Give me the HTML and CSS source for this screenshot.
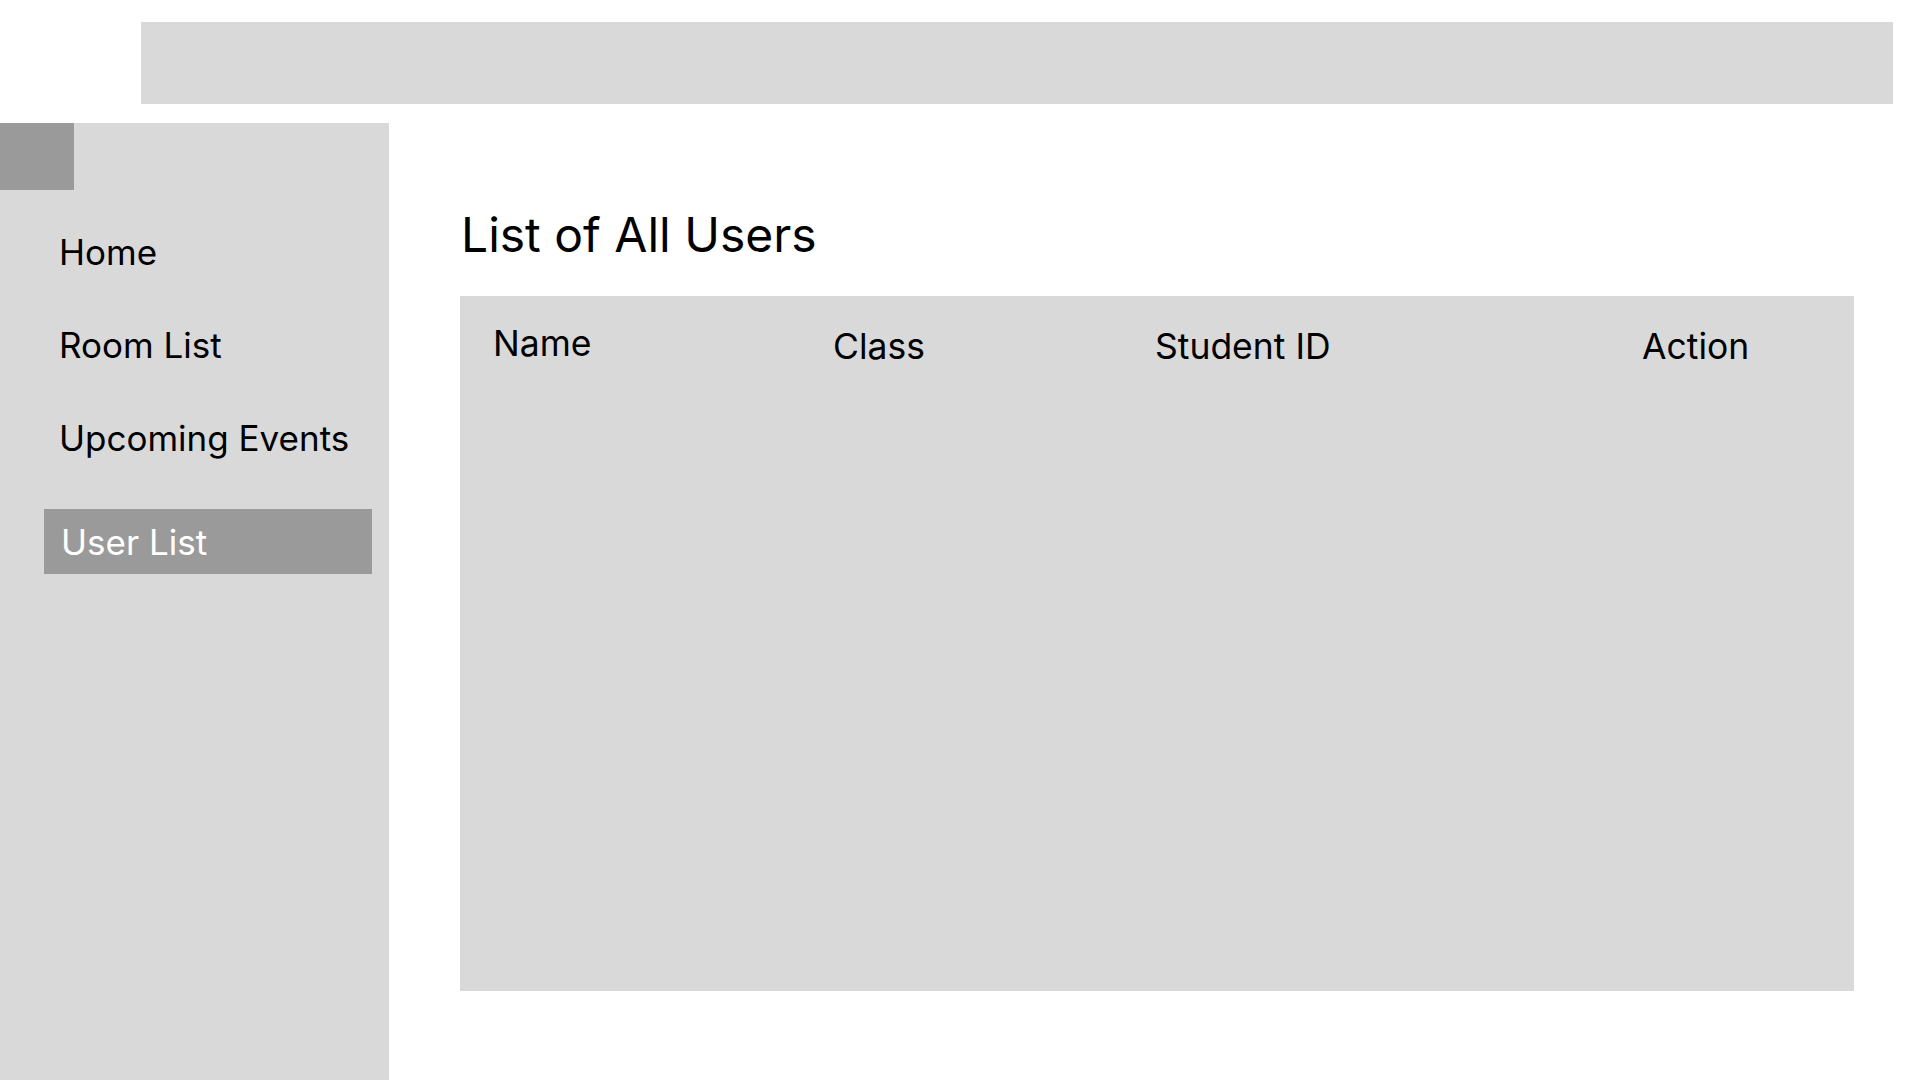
FILE: index.html
```html
<!DOCTYPE html>
<html lang="en">
<head>
<meta charset="utf-8">
<title>List of All Users</title>
<link rel="stylesheet" href="styles.css">
</head>
<body>
<header class="topbar"></header>
<div class="layout">
  <aside class="sidebar">
    <div class="logo"></div>
    <nav class="nav">
      <a class="nav-item">Home</a>
      <a class="nav-item">Room List</a>
      <a class="nav-item">Upcoming Events</a>
      <a class="nav-item active">User List</a>
    </nav>
  </aside>
  <main class="main">
    <h1 class="title">List of All Users</h1>
    <section class="table">
      <div class="table-head">
        <div class="th th-name">Name</div>
        <div class="th">Class</div>
        <div class="th">Student ID</div>
        <div class="th">Action</div>
      </div>
    </section>
  </main>
</div>
</body>
</html>
```

FILE: styles.css
```css
* { box-sizing: border-box; }
html, body { margin: 0; padding: 0; }
body {
  width: 1920px;
  height: 1080px;
  overflow: hidden;
  background: #ffffff;
  font-family: Inter, "Noto Sans", sans-serif;
  color: #000000;
  padding-top: 22px;
}
.topbar {
  margin-left: 141px;
  width: 1752px;
  height: 82px;
  background: #d9d9d9;
}
.layout {
  margin-top: 19px;
  display: flex;
  height: 957px;
}
.sidebar {
  width: 389px;
  flex: 0 0 389px;
  background: #d9d9d9;
  display: flex;
  flex-direction: column;
}
.logo {
  width: 74px;
  height: 67px;
  background: #9a9a9a;
}
.nav {
  display: flex;
  flex-direction: column;
  gap: 49px;
  margin-top: 40px;
}
.nav-item {
  display: block;
  font-size: 35px;
  line-height: 44px;
  padding-left: 59px;
  color: #000000;
}
.nav-item.active {
  margin-left: 44px;
  width: 328px;
  padding: 11px 0 10px 17px;
  background: #9a9a9a;
  color: #ffffff;
}
.main {
  flex: 1;
  padding-left: 71px;
}
.title {
  margin: 83px 0 0 0;
  font-size: 48px;
  font-weight: 400;
  line-height: 58px;
  padding-left: 1px;
}
.table {
  margin-top: 32px;
  width: 1394px;
  height: 695px;
  background: #d9d9d9;
}
.table-head {
  display: grid;
  grid-template-columns: 340px 322px 487px 1fr;
  padding: 30px 0 0 33px;
  align-items: start;
}
.th {
  font-size: 35.5px;
  line-height: 41px;
}
.th-name {
  margin-top: -3px;
}
```
